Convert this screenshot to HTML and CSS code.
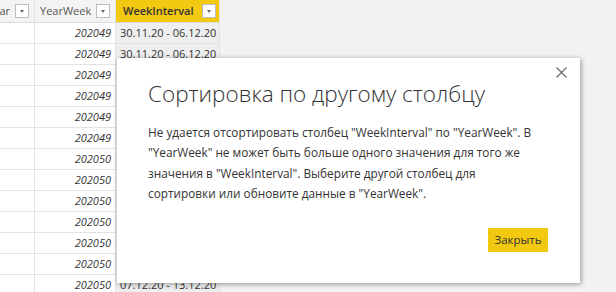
FILE: index.html
```html
<!DOCTYPE html>
<html lang="ru">
<head>
    <meta charset="UTF-8">
    <title>Сортировка по другому столбцу</title>
    <link rel="stylesheet" href="styles.css">
</head>
<body>

    <div class="table">
        <div class="cell head"><span class="head-label">ar</span><span class="filter"></span></div>
        <div class="cell head"><span class="head-label">YearWeek</span><span class="filter"></span></div>
        <div class="cell head active"><span class="head-label">WeekInterval</span><span class="filter"></span></div>

        <div class="cell"></div><div class="cell num">202049</div><div class="cell sel">30.11.20 - 06.12.20</div>
        <div class="cell"></div><div class="cell num">202049</div><div class="cell sel">30.11.20 - 06.12.20</div>
        <div class="cell"></div><div class="cell num">202049</div><div class="cell sel">30.11.20 - 06.12.20</div>
        <div class="cell"></div><div class="cell num">202049</div><div class="cell sel">30.11.20 - 06.12.20</div>
        <div class="cell"></div><div class="cell num">202049</div><div class="cell sel">30.11.20 - 06.12.20</div>
        <div class="cell"></div><div class="cell num">202049</div><div class="cell sel">30.11.20 - 06.12.20</div>
        <div class="cell"></div><div class="cell num">202050</div><div class="cell sel">07.12.20 - 13.12.20</div>
        <div class="cell"></div><div class="cell num">202050</div><div class="cell sel">07.12.20 - 13.12.20</div>
        <div class="cell"></div><div class="cell num">202050</div><div class="cell sel">07.12.20 - 13.12.20</div>
        <div class="cell"></div><div class="cell num">202050</div><div class="cell sel">07.12.20 - 13.12.20</div>
        <div class="cell"></div><div class="cell num">202050</div><div class="cell sel">07.12.20 - 13.12.20</div>
        <div class="cell"></div><div class="cell num">202050</div><div class="cell sel">07.12.20 - 13.12.20</div>
        <div class="cell"></div><div class="cell num">202050</div><div class="cell sel">07.12.20 - 13.12.20</div>
    </div>

    <div class="dialog">
        <button class="close" aria-label="Закрыть">
            <svg width="11" height="11" viewBox="0 0 11 11"><path d="M0.5 0.5 L10.5 10.5 M10.5 0.5 L0.5 10.5" stroke="#666" stroke-width="1.1" fill="none"/></svg>
        </button>
        <h1>Сортировка по другому столбцу</h1>
        <p>Не удается отсортировать столбец "WeekInterval" по "YearWeek". В "YearWeek" не может быть больше одного значения для того же значения в "WeekInterval". Выберите другой столбец для<br>сортировки или обновите данные в "YearWeek".</p>
        <div class="actions">
            <button class="primary">Закрыть</button>
        </div>
    </div>

</body>
</html>
```

FILE: styles.css
```css
body {
    font-family: 'Open Sans', 'Noto Sans', sans-serif;
    background-color: #f3f2f1;
    color: #333;
    margin: 0;
    position: relative;
    height: 292px;
    overflow: hidden;
}

.table {
    display: grid;
    grid-template-columns: 35px 81px 104px;
    grid-auto-rows: 21px;
    grid-template-rows: 23px;
    width: 220px;
    background: #fff;
}

.cell {
    border-right: 1px solid #e3e3e3;
    border-bottom: 1px solid #e3e3e3;
    font-size: 11px;
    line-height: 20px;
    padding: 0 4px;
    white-space: nowrap;
    overflow: hidden;
}

.head {
    display: flex;
    align-items: center;
    justify-content: space-between;
    background: #f3f3f3;
    color: #555;
    border-bottom-color: #dcdcdc;
    padding: 0 5px 0 5px;
}

.head:first-child {
    justify-content: flex-end;
    gap: 5px;
}

.head.active {
    background: #f2c811;
    color: #333;
    font-weight: 600;
    padding-left: 7px;
    padding-right: 3px;
}

.filter {
    width: 12px;
    height: 12px;
    border: 1px solid #bdbdbd;
    background: #fff;
    position: relative;
    flex: none;
}

.filter::after {
    content: "";
    position: absolute;
    left: 4px;
    top: 5px;
    border-left: 2.5px solid transparent;
    border-right: 2.5px solid transparent;
    border-top: 3px solid #666;
}

.num {
    text-align: right;
    font-style: italic;
    color: #333;
}

.sel {
    background: #eeeeee;
    color: #333;
}

.dialog {
    position: absolute;
    left: 117px;
    top: 58px;
    width: 463px;
    height: 225px;
    box-sizing: border-box;
    background: #fff;
    box-shadow: 1px 1px 5px rgba(0,0,0,0.4);
    padding: 16px 32px 0 31px;
}

.close {
    position: absolute;
    right: 9px;
    top: 4px;
    width: 20px;
    height: 20px;
    padding: 0;
    border: none;
    background: none;
    display: flex;
    align-items: center;
    justify-content: center;
}

.dialog h1 {
    margin: 0;
    font-size: 22.5px;
    font-weight: 300;
    color: #333;
    line-height: 40px;
}

.dialog p {
    margin: 8px -6px 0 0;
    font-size: 11.8px;
    line-height: 20.4px;
    color: #333;
}

.actions {
    display: flex;
    justify-content: flex-end;
    margin-top: 24px;
}

.primary {
    font-family: inherit;
    font-size: 11.5px;
    color: #333;
    background: #f2c811;
    border: none;
    height: 24px;
    width: 60px;
    padding: 0;
}
```
